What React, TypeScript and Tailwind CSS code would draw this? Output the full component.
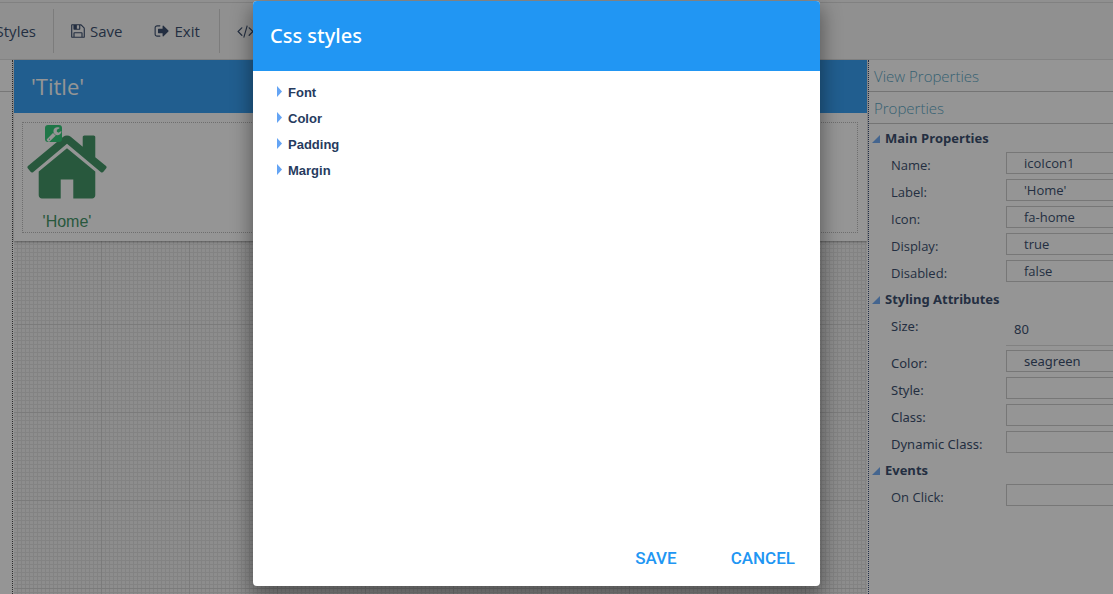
import React from "react";

type IconProps = { className?: string };

const Glyph = ({ d, box = 1792, className }: { d: string; box?: number; className?: string }) => (
  <svg viewBox={`0 0 ${box} 1792`} className={className} fill="currentColor" aria-hidden="true">
    <path d={d} />
  </svg>
);

const HomeIcon = (p: IconProps) => (
  <Glyph
    {...p}
    d="M1472 992v480q0 26-19 45t-45 19h-384v-384h-256v384h-384q-26 0-45-19t-19-45v-480q0-1 .5-3t.5-3l575-474 575 474q1 2 1 6zm223-69l-62 74q-8 9-21 11h-3q-13 0-21-7l-692-577-692 577q-12 8-24 7-13-2-21-11l-62-74q-8-10-7-23.5t11-21.5l719-599q32-26 76-26t76 26l244 204v-195q0-14 9-23t23-9h192q14 0 23 9t9 23v408l219 182q10 8 11 21.5t-7 23.5z"
  />
);

const SaveIcon = (p: IconProps) => (
  <Glyph
    {...p}
    d="M512 1536h768v-384h-768v384zm896 0h128v-896q0-14-10-38.5t-20-34.5l-281-281q-10-10-34-20t-39-10v416q0 40-28 68t-68 28h-576q-40 0-68-28t-28-68v-416h-128v1280h128v-416q0-40 28-68t68-28h832q40 0 68 28t28 68v416zm-384-928v-320q0-13-9.5-22.5t-22.5-9.5h-192q-13 0-22.5 9.5t-9.5 22.5v320q0 13 9.5 22.5t22.5 9.5h192q13 0 22.5-9.5t9.5-22.5zm640 32v928q0 40-28 68t-68 28h-1344q-40 0-68-28t-28-68v-1344q0-40 28-68t68-28h928q40 0 88 20t76 48l280 280q28 28 48 76t20 88z"
  />
);

const ExitIcon = (p: IconProps) => (
  <Glyph
    {...p}
    d="M704 1440q0 4 1 20t.5 26.5-3 23.5-10 19.5-20.5 6.5h-320q-119 0-203.5-84.5t-84.5-203.5v-704q0-119 84.5-203.5t203.5-84.5h320q13 0 22.5 9.5t9.5 22.5q0 4 1 20t.5 26.5-3 23.5-10 19.5-20.5 6.5h-320q-66 0-113 47t-47 113v704q0 66 47 113t113 47h312l11.5 1 11.5 3 8 5.5 7 9 2 13.5zm928-544q0 26-19 45l-544 544q-19 19-45 19t-45-19-19-45v-288h-448q-26 0-45-19t-19-45v-384q0-26 19-45t45-19h448v-288q0-26 19-45t45-19 45 19l544 544q19 19 19 45z"
  />
);

const CodeIcon = (p: IconProps) => (
  <Glyph
    {...p}
    box={1920}
    d="M617 1399l-50 50q-10 10-23 10t-23-10l-466-466q-10-10-10-23t10-23l466-466q10-10 23-10t23 10l50 50q10 10 10 23t-10 23l-393 393 393 393q10 10 10 23t-10 23zm591-1067l-373 1291q-4 13-15.5 19.5t-23.5 2.5l-62-17q-13-4-19.5-15.5t-2.5-24.5l373-1291q4-13 15.5-19.5t23.5-2.5l62 17q13 4 19.5 15.5t2.5 24.5zm657 651l-466 466q-10 10-23 10t-23-10l-50-50q-10-10-10-23t10-23l393-393-393-393q-10-10-10-23t10-23l50-50q10-10 23-10t23 10l466 466q10 10 10 23t-10 23z"
  />
);

const WrenchIcon = (p: IconProps) => (
  <Glyph
    {...p}
    d="M448 1472q0-26-19-45t-45-19-45 19-19 45 19 45 45 19 45-19 19-45zm644-420l-682 682q-37 37-90 37-52 0-91-37l-106-108q-38-36-38-90 0-53 38-91l681-681q39 98 114.5 173.5t173.5 114.5zm634-435q0 39-23 106-47 134-164.5 217.5t-258.5 83.5q-185 0-316.5-131.5t-131.5-316.5 131.5-316.5 316.5-131.5q58 0 121.5 16.5t107.5 46.5q16 11 16 28t-16 28l-293 169v224l193 107q5-3 79-48.5t135.5-81 70.5-35.5q15 0 23.5 10t8.5 25z"
  />
);

const OpenMarker = () => (
  <svg viewBox="0 0 8 8" className="h-2 w-2" fill="#64a4f4" aria-hidden="true">
    <path d="M8 0V8H0Z" />
  </svg>
);

const Section = ({ title, children }: { title: string; children: React.ReactNode }) => (
  <section>
    <button type="button" className="flex h-[26px] items-center gap-[5px] pl-[3px] text-[13px] font-bold">
      <OpenMarker />
      {title}
    </button>
    {children}
  </section>
);

const Field = ({ label, value = "" }: { label: string; value?: string }) => {
  const id = `field-${label.toLowerCase().replace(/\s/g, "-")}`;
  return (
    <div className="flex h-[27px] items-start pl-[22px]">
      <label htmlFor={id} className="w-[115px] shrink-0 pt-[3px] text-[13px] leading-5">
        {label}:
      </label>
      <input
        id={id}
        defaultValue={value}
        className="h-[22px] min-w-0 flex-1 border border-r-0 border-[#c6c6c6] bg-transparent pl-[17px] text-[13px] outline-none"
      />
    </div>
  );
};

const groups = ["Font", "Color", "Padding", "Margin"];

export default function App() {
  return (
    <div className="relative flex min-h-screen flex-col overflow-hidden bg-white font-['Open_Sans','Noto_Sans',sans-serif] text-[#263b5e]">
      <header className="border-b border-[#dcdcdc] bg-[#f6f6f6] text-[15px]">
        <div className="h-[3px] border-b border-[#d8d8d8]" />
        <div className="flex h-14 items-center">
          <div className="flex h-11 w-[54px] items-center justify-end border-r border-[#cfcfcf] pr-[17px]">
            <button type="button">Styles</button>
          </div>
          <div className="flex h-11 w-[166px] items-center gap-8 border-r border-[#cfcfcf] pl-4">
            <button type="button" className="flex items-center gap-1">
              <SaveIcon className="h-4 w-4" />
              Save
            </button>
            <button type="button" className="flex items-center gap-1">
              <ExitIcon className="h-4 w-4" />
              Exit
            </button>
          </div>
          <button type="button" aria-label="Code" className="pl-[17px]">
            <CodeIcon className="h-4 w-[17px]" />
          </button>
        </div>
      </header>

      <div className="flex flex-1">
        <aside className="w-[13px] shrink-0 border-r border-dotted border-[#333333]">
          <div className="h-8 border-b border-[#c6c6c6]" />
        </aside>

        <main className="mx-px min-w-0 flex-1 bg-[#f0f0f0] bg-[linear-gradient(to_right,#cecece_1px,transparent_1px),linear-gradient(to_bottom,#cecece_1px,transparent_1px),linear-gradient(to_right,#dcdcdc_1px,transparent_1px),linear-gradient(to_bottom,#dcdcdc_1px,transparent_1px)] bg-[length:88px_88px,88px_88px,4px_4px,4px_4px] bg-[position:87px_0px,0px_0px,3px_0px,0px_0px]">
          <div className="bg-white pb-2 shadow-[0_1px_2px_rgba(0,0,0,0.4)]">
            <h1 className="flex h-[53px] items-center bg-[#2196f3] pl-[17px] text-[22px] text-white">
              'Title'
            </h1>
            <div className="mr-[9px] ml-2 mt-[9px] flex h-[111px] border border-dotted border-[#b5b5b5]">
              <div className="relative flex w-[88px] flex-col items-center text-[#2e8b57]">
                <HomeIcon className="h-[88px] w-[88px] shrink-0" />
                <span className="font-['Liberation_Sans',Arial,sans-serif] text-base leading-[22px]">'Home'</span>
                <span className="absolute top-[2px] left-[22px] flex h-[17px] w-[17px] items-center justify-center rounded-[3px] bg-[#1ec46a] text-white">
                  <WrenchIcon className="h-4 w-4" />
                </span>
              </div>
            </div>
          </div>
        </main>

        <aside className="w-[245px] shrink-0 border-l border-dotted border-[#1c3568]">
          <h2 className="flex h-8 items-center border-b border-[#c0c0c0] pt-[2px] pl-[5px] text-[15px] font-light text-[#4a9cbd]">
            View Properties
          </h2>
          <h2 className="flex h-8 items-center border-b border-[#c0c0c0] pt-[2px] pl-[5px] text-[15px] font-light text-[#4a9cbd]">
            Properties
          </h2>
          <div className="pt-[2px]">
            <Section title="Main Properties">
              <Field label="Name" value="icoIcon1" />
              <Field label="Label" value="'Home'" />
              <Field label="Icon" value="fa-home" />
              <Field label="Display" value="true" />
              <Field label="Disabled" value="false" />
            </Section>
            <div className="font-['Noto_Sans','Open_Sans',sans-serif]">
              <Section title="Styling Attributes">
                <div className="flex h-[37px] items-start pl-[22px]">
                  <label htmlFor="size" className="w-[115px] shrink-0 pt-[3px] text-[13px] leading-5">
                    Size:
                  </label>
                  <input
                    id="size"
                    defaultValue="80"
                    className="h-[33px] min-w-0 flex-1 border-b border-[#d8d8d8] bg-transparent pl-2 text-[13px] outline-none"
                  />
                </div>
                <Field label="Color" value="seagreen" />
                <Field label="Style" />
                <Field label="Class" />
                <Field label="Dynamic Class" />
              </Section>
            </div>
            <Section title="Events">
              <Field label="On Click" />
            </Section>
          </div>
        </aside>
      </div>

      <div className="absolute inset-0 flex items-start justify-center bg-[rgba(33,33,33,0.48)] pt-px pr-10">
        <div
          role="dialog"
          aria-labelledby="dialog-title"
          className="flex w-full max-w-[567px] flex-col overflow-hidden rounded-[4px] bg-white shadow-[0_8px_20px_2px_rgba(0,0,0,0.4)]"
        >
          <h2 id="dialog-title" className="bg-[#2196f3] py-5 pl-[17px] font-['Noto_Sans','Open_Sans',sans-serif] text-[20px] leading-[30px] font-medium text-white">
            Css styles
          </h2>
          <div className="min-h-[459px] pt-[9px] pl-6 font-['Liberation_Sans',Arial,sans-serif] text-[13px] font-bold">
            {groups.map((name) => (
              <button key={name} type="button" className="flex h-[26px] items-center gap-[6px]">
                <svg viewBox="0 0 5 11" className="mb-[3px] h-[11px] w-[5px]" fill="#64a4f4" aria-hidden="true">
                  <path d="M0 0L5 5.5L0 11Z" />
                </svg>
                {name}
              </button>
            ))}
          </div>
          <div className="flex justify-end gap-[54px] pt-4 pr-[25px] pb-4 font-[Roboto,sans-serif] text-[17px] leading-6 font-medium text-[#2196f3]">
            <button type="button">SAVE</button>
            <button type="button">CANCEL</button>
          </div>
        </div>
      </div>
    </div>
  );
}
